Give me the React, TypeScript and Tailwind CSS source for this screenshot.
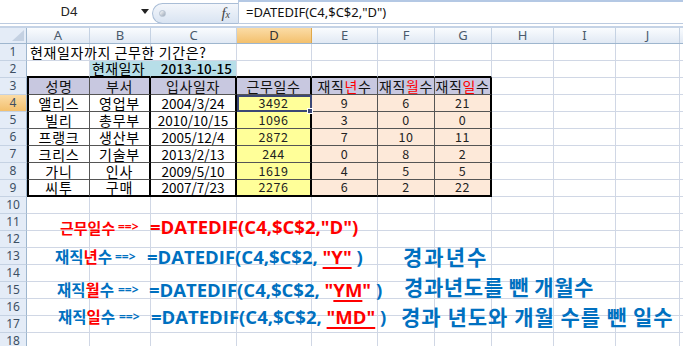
import type { ReactNode } from "react";

const WIDTHS = ["w-[63px]", "w-[61px]", "w-[86px]", "w-[75px]", "w-[66px]", "w-[57px]", "w-[57px]", "w-[62px]", "w-[62px]", "w-[64px]"];
const LETTERS = ["A", "B", "C", "D", "E", "F", "G", "H", "I", "J"];
const GRID = "border-r border-b border-r-[#d0d7e5] border-b-[#d0d7e5]";

type CellDef = { content?: ReactNode; cls?: string };

const staff = [
  ["앨리스", "영업부", "2004/3/24", "3492", "9", "6", "21"],
  ["빌리", "총무부", "2010/10/15", "1096", "3", "0", "0"],
  ["프랭크", "생산부", "2005/12/4", "2872", "7", "10", "11"],
  ["크리스", "기술부", "2013/2/13", "244", "0", "8", "2"],
  ["가니", "인사", "2009/5/10", "1619", "4", "5", "5"],
  ["씨투", "구매", "2007/7/23", "2276", "6", "2", "22"],
];

// thick lines right of B, C, D and G; thin ones elsewhere
function tableBorder(col: number, lastRow: boolean) {
  const right = [1, 2, 3, 6].includes(col) ? "border-r-2 border-r-black" : "border-r border-r-[#555555]";
  const bottom = lastRow ? "border-b-2 border-b-black" : "border-b border-b-[#555555]";
  const left = col === 0 ? "border-l-2 border-l-black" : "";
  return `${right} ${bottom} ${left}`;
}

function RowHead({ n, active }: { n: number; active?: boolean }) {
  return (
    <div
      className={`w-[27px] h-[17px] shrink-0 flex items-center justify-center border-r border-b border-r-[#9eb6ce] border-b-[#c5d2e3] text-[12px] text-[#3d4f63] font-['Noto_Sans',sans-serif] ${
        active ? "bg-linear-to-b from-[#fbdca6] to-[#f3c06c]" : "bg-[#e4ecf7]"
      }`}
    >
      {n}
    </div>
  );
}

function Row({ n, cells = [], active }: { n: number; cells?: CellDef[]; active?: boolean }) {
  return (
    <div className="flex h-[17px]">
      <RowHead n={n} active={active} />
      {WIDTHS.map((w, i) => {
        const c = cells[i] ?? {};
        return (
          <div key={i} className={`${w} h-[17px] shrink-0 flex items-center whitespace-nowrap ${c.cls ?? GRID}`}>
            {c.content}
          </div>
        );
      })}
      <div className="flex-1 h-[17px] border-b border-b-[#d0d7e5]" />
    </div>
  );
}

const Red = ({ children }: { children: ReactNode }) => <span className="text-[#ff0000]">{children}</span>;

function headerRow(): CellDef[] {
  const titles: ReactNode[] = [
    "성명",
    "부서",
    "입사일자",
    "근무일수",
    <>재직<Red>년</Red>수</>,
    <>재직<Red>월</Red>수</>,
    <>재직<Red>일</Red>수</>,
  ];
  return titles.map((t, i) => ({
    content: t,
    cls: `${tableBorder(i, false)} bg-[#c8c8e0] justify-center text-[14px] tracking-[0.6px] text-[#111]`,
  }));
}

function dataRow(r: string[], idx: number): CellDef[] {
  const last = idx === staff.length - 1;
  return r.map((v, i) => {
    let bg = "bg-white";
    let txt = "text-[14px] tracking-[0.8px]";
    if (i === 2) txt = "text-[13.5px]";
    if (i === 3) {
      bg = "bg-[#ffff99]";
      txt = "text-[12.5px] tracking-[0.6px] text-[#222]";
    }
    if (i > 3) {
      bg = "bg-[#fde9d9]";
      txt = "text-[12.5px] tracking-[0.6px] text-[#222]";
    }
    const selected = idx === 0 && i === 3;
    return {
      content: selected ? (
        <>
          {v}
          <span className="absolute -right-[3px] -bottom-[3px] w-[6px] h-[6px] bg-[#3b4775] border border-white" />
        </>
      ) : (
        v
      ),
      cls: `${tableBorder(i, last)} ${bg} ${txt} justify-center ${
        selected ? "relative z-10 outline-2 -outline-offset-2 outline-[#3b4775]" : ""
      }`,
    };
  });
}

const thickTop: CellDef = { cls: "border-r border-r-[#d0d7e5] border-b-2 border-b-black" };

function Formula({
  pl,
  shift,
  labelW,
  arrowW,
  label,
  tail,
  red,
}: {
  pl: string;
  shift: string;
  labelW: string;
  arrowW: string;
  label: ReactNode;
  tail: ReactNode;
  red?: boolean;
}) {
  return (
    <div className={`relative z-10 shrink-0 flex items-center font-bold ${red ? "text-[#ff0000]" : "text-[#0070c0]"} ${pl} ${shift}`}>
      <span className={`${labelW} ${red ? "text-[15px]" : "text-[15.5px]"} leading-none`}>{label}</span>
      <span className={`${arrowW} text-[12px] leading-none font-['Open_Sans',sans-serif]`}>==&gt;</span>
      <span className="text-[18.5px] leading-none font-['Open_Sans',sans-serif] whitespace-pre">{tail}</span>
    </div>
  );
}

function Note({ pl, shift, children }: { pl: string; shift: string; children: ReactNode }) {
  return (
    <div className={`relative z-10 shrink-0 ${pl} ${shift} text-[21px] leading-none font-bold text-[#0070c0]`}>
      {children}
    </div>
  );
}

const uline = "underline decoration-2 underline-offset-[3px] decoration-[#ff0000]";

export default function App() {
  return (
    <div className="w-[683px] h-[346px] overflow-hidden bg-white font-['Noto_Sans_CJK_KR',sans-serif] text-black">
      {/* formula bar */}
      <div className="flex h-[24px] border-b border-b-[#bccbe0]">
        <div className="w-[138px] flex items-center justify-center text-[13px] text-[#222] font-['Noto_Sans',sans-serif]">
          D4
        </div>
        <div className="w-[13px] flex items-center justify-center">
          <svg width="8" height="5" viewBox="0 0 8 5">
            <polygon points="0,0 8,0 4,5" fill="#222" />
          </svg>
        </div>
        <div className="ml-[1px] mt-[3px] w-[86px] h-[21px] rounded-l-full border border-r-0 border-[#a9bdd6] bg-linear-to-b from-[#f3f6fb] to-[#d9e4f2] flex items-center pl-[6px] pr-[8px] justify-between">
          <span className="w-[7px] h-[7px] rounded-full bg-linear-to-br from-[#ffffff] to-[#9aa6b6] border border-[#b5c1d0]" />
          <span className="italic font-['Liberation_Serif',serif] text-[15px] text-[#444] leading-none">
            f<span className="text-[10px]">x</span>
          </span>
        </div>
        <div className="flex-1 border-t-2 border-t-[#b4c8e4] border-l border-l-[#b9c9de] pl-[7px] flex items-center text-[13px] text-[#111] font-['Noto_Sans',sans-serif]">
          =DATEDIF(C4,$C$2,"D")
        </div>
      </div>
      <div className="h-[4px] border-b-2 border-b-[#c5d3e6]" />

      {/* column letters */}
      <div className="flex h-[16px] border-b border-b-[#9eb6ce]">
        <div className="w-[27px] shrink-0 border-r border-r-[#9eb6ce] bg-[#e4ecf7] flex items-end justify-end pr-[2px] pb-[2px]">
          <svg width="12" height="11" viewBox="0 0 12 11">
            <polygon points="12,0 12,11 0,11" fill="#c4d1e2" />
          </svg>
        </div>
        {LETTERS.map((l, i) => (
          <div
            key={l}
            className={`${WIDTHS[i]} shrink-0 flex items-center justify-center border-r text-[13px] font-['Noto_Sans',sans-serif] ${
              i === 3
                ? "bg-linear-to-b from-[#fbdca6] to-[#f3c06c] border-r-[#e0a84a] text-[#333]"
                : "bg-linear-to-b from-[#fafcfe] to-[#e1e9f4] border-r-[#c5d2e3] text-[#4a5a6c]"
            }`}
          >
            {l}
          </div>
        ))}
        <div className="flex-1 bg-linear-to-b from-[#fafcfe] to-[#e1e9f4]" />
      </div>

      <Row
        n={1}
        cells={[
          {
            content: <span className="pl-[3px] text-[14px] tracking-[0.6px] relative z-10">현재일자까지 근무한 기간은?</span>,
            cls: GRID,
          },
        ]}
      />
      <Row
        n={2}
        cells={[
          thickTop,
          {
            content: "현재일자",
            cls: "pl-[2px] bg-[#b7dee8] border-r border-r-[#b7dee8] border-b-2 border-b-black text-[14px] tracking-[0.4px]",
          },
          {
            content: "2013-10-15",
            cls: "justify-end pr-[4px] bg-[#b7dee8] border-r border-r-[#d0d7e5] border-b-2 border-b-black text-[13.5px] font-medium",
          },
          thickTop,
          thickTop,
          thickTop,
          thickTop,
        ]}
      />
      <Row n={3} cells={headerRow()} />
      {staff.map((r, idx) => (
        <Row key={idx} n={4 + idx} cells={dataRow(r, idx)} active={idx === 0} />
      ))}
      <Row n={10} />
      <Row
        n={11}
        cells={[
          {
            cls: GRID,
            content: (
              <Formula
                red
                pl="pl-[33px]"
                shift="mt-[10px]"
                labelW="w-[58px]"
                arrowW="w-[32px]"
                label="근무일수"
                tail={'=DATEDIF(C4,$C$2,"D")'}
              />
            ),
          },
        ]}
      />
      <Row n={12} />
      <Row
        n={13}
        cells={[
          {
            cls: GRID,
            content: (
              <Formula
                pl="pl-[28px]"
                shift="mt-[2px]"
                labelW="w-[60px]"
                arrowW="w-[32px]"
                label={<>재직<Red>년</Red>수</>}
                tail={
                  <>
                    =DATEDIF(C4,$C$2, <span className={`text-[#ff0000] ${uline}`}>"Y"</span> )
                  </>
                }
              />
            ),
          },
          {},
          {},
          {},
          {},
          { cls: GRID, content: <Note pl="pl-[25px] tracking-[2px]" shift="mt-[1px]">경과년수</Note> },
        ]}
      />
      <Row n={14} />
      <Row
        n={15}
        cells={[
          {
            cls: GRID,
            content: (
              <Formula
                pl="pl-[30px]"
                shift=""
                labelW="w-[61px]"
                arrowW="w-[31px]"
                label={<>재직<Red>월</Red>수</>}
                tail={
                  <>
                    =DATEDIF(C4,$C$2, <span className="text-[#ff0000]">"<span className={uline}>YM</span>"</span> )
                  </>
                }
              />
            ),
          },
          {},
          {},
          {},
          {},
          { cls: GRID, content: <Note pl="pl-[26px] tracking-[0.6px]" shift="mb-[8px]">경과년도를 뺀 개월수</Note> },
        ]}
      />
      <Row n={16} />
      <Row
        n={17}
        cells={[
          {
            cls: GRID,
            content: (
              <Formula
                pl="pl-[31px]"
                shift="mb-[14px]"
                labelW="w-[61px]"
                arrowW="w-[32px]"
                label={<>재직<Red>일</Red>수</>}
                tail={
                  <>
                    =DATEDIF(C4,$C$2, <span className={`text-[#ff0000] ${uline}`}>"MD"</span> )
                  </>
                }
              />
            ),
          },
          {},
          {},
          {},
          {},
          {
            cls: GRID,
            content: (
              <Note pl="pl-[23px] tracking-[1px]" shift="mb-[16px]">
                경과 년도와 개월 수를 뺀 일수
              </Note>
            ),
          },
        ]}
      />
      <Row n={18} />
    </div>
  );
}
